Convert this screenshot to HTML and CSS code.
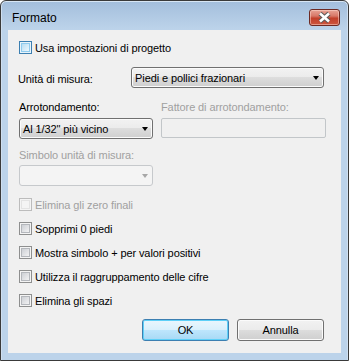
FILE: index.html
```html
<!DOCTYPE html>
<html lang="it">
<head>
<meta charset="utf-8">
<title>Formato</title>
<link rel="stylesheet" href="styles.css">
</head>
<body>
<div class="window">
  <div class="titlebar">
    <span class="title">Formato</span>
    <div class="close">
      <svg width="29" height="15" viewBox="0 0 29 15">
        <path d="M10 3.5 L19 11.5 M19 3.5 L10 11.5" stroke="#5a5a5a" stroke-width="4.6" fill="none"/>
        <path d="M10 3.5 L19 11.5 M19 3.5 L10 11.5" stroke="#ffffff" stroke-width="2.6" fill="none"/>
      </svg>
    </div>
  </div>
  <div class="client">
    <div class="check hot first">
      <span class="box"></span><span class="ctext">Usa impostazioni di progetto</span>
    </div>
    <div class="row-units">
      <span class="lbl units-lbl">Unità di misura:</span>
      <div class="combo units-combo"><span class="ctext-combo">Piedi e pollici frazionari</span><span class="arrow"></span></div>
    </div>
    <div class="pair labels">
      <span class="lbl">Arrotondamento:</span>
      <span class="lbl disabled">Fattore di arrotondamento:</span>
    </div>
    <div class="pair fields">
      <div class="combo"><span class="ctext-combo">Al 1/32" più vicino</span><span class="arrow"></span></div>
      <div class="edit disabled-edit"></div>
    </div>
    <div class="lbl disabled sym-lbl">Simbolo unità di misura:</div>
    <div class="combo combo-disabled sym-combo"><span class="ctext-combo"></span><span class="arrow"></span></div>
    <div class="check disabled-check mid">
      <span class="box"></span><span class="ctext">Elimina gli zero finali</span>
    </div>
    <div class="check">
      <span class="box"></span><span class="ctext">Sopprimi 0 piedi</span>
    </div>
    <div class="check">
      <span class="box"></span><span class="ctext">Mostra simbolo + per valori positivi</span>
    </div>
    <div class="check">
      <span class="box"></span><span class="ctext">Utilizza il raggruppamento delle cifre</span>
    </div>
    <div class="check">
      <span class="box"></span><span class="ctext">Elimina gli spazi</span>
    </div>
    <div class="buttons">
      <div class="btn default">OK</div>
      <div class="btn">Annulla</div>
    </div>
  </div>
</div>
</body>
</html>
```

FILE: styles.css
```css
html, body {
  margin: 0;
  padding: 0;
  background: #ffffff;
}
body {
  font-family: "Liberation Sans", Arial, sans-serif;
  font-size: 11px;
  letter-spacing: -0.1px;
  color: #000;
}
.window {
  width: 349px;
  height: 361px;
  box-sizing: border-box;
  border: 1px solid #3a3a3a;
  border-radius: 6px 6px 0 0;
  background: linear-gradient(to bottom, #a3bedc 0px, #bcd3ea 28px, #bcd3ea 100%);
  display: flex;
  flex-direction: column;
  box-shadow: inset 0 1px 0 #d8e6f4, inset 1px 0 0 #cfdff0, inset -1px 0 0 #cfdff0;
}
.titlebar {
  height: 29px;
  display: flex;
  justify-content: space-between;
  align-items: flex-start;
  padding: 0 8px 0 11px;
  flex: none;
}
.title {
  font-size: 12px;
  letter-spacing: 0;
  line-height: 15px;
  margin-top: 10px;
}
.close {
  margin-top: 8px;
  width: 31px;
  height: 17px;
  box-sizing: border-box;
  border: 1px solid #6d2a23;
  border-radius: 3px;
  background: linear-gradient(to bottom, #e8a496 0%, #d87868 40%, #c2402b 55%, #cd573f 100%);
  box-shadow: inset 0 0 0 1px rgba(255, 220, 210, 0.5);
  display: flex;
}
.client {
  flex: 1;
  margin: 0 7px 7px 7px;
  background: #f0f0f0;
  padding: 11px 17px 0 11px;
  display: flex;
  flex-direction: column;
}
.check {
  display: flex;
  align-items: flex-start;
  height: 13px;
  margin-top: 11px;
}
.check.first {
  margin-top: 0;
}
.check.mid {
  margin-top: 12px;
}
.box {
  width: 13px;
  height: 13px;
  box-sizing: border-box;
  border: 1px solid #8e8f8f;
  background: #f4f4f4;
  display: flex;
  align-items: center;
  justify-content: center;
  flex: none;
}
.box::before {
  content: "";
  width: 9px;
  height: 9px;
  box-sizing: border-box;
  border: 1px solid #b4b7bc;
  background: linear-gradient(135deg, #cdd0d5 0%, #f2f2f3 100%);
}
.hot .box {
  border-color: #3c7fb1;
  background: #e8f4fb;
}
.hot .box::before {
  border-color: #8fcbee;
  background: linear-gradient(135deg, #b9def3 0%, #edf7fd 100%);
}
.disabled-check .box {
  border-color: #bcbcbc;
  background: #f4f4f4;
}
.disabled-check .box::before {
  border-color: #e3e3e3;
  background: #f4f4f4;
}
.ctext {
  line-height: 15px;
  margin-top: 0px;
  margin-left: 3px;
  white-space: nowrap;
}
.disabled-check .ctext {
  color: #a0a0a0;
}
.lbl {
  line-height: 15px;
  white-space: nowrap;
}
.disabled {
  color: #a0a0a0;
}
.row-units {
  display: flex;
  align-items: center;
  margin-top: 13px;
  height: 21px;
}
.units-lbl {
  width: 115px;
  margin-left: -1px;
  padding-top: 3px;
}
.combo {
  height: 21px;
  box-sizing: border-box;
  border: 1px solid #707070;
  border-radius: 3px;
  background: linear-gradient(to bottom, #f2f2f2 0%, #ebebeb 50%, #dddddd 50%, #cfcfcf 100%);
  box-shadow: inset 0 0 0 1px #fbfbfb;
  display: flex;
  align-items: center;
  justify-content: space-between;
  padding: 0 4px 0 3px;
}
.units-combo {
  width: 196px;
}
.ctext-combo {
  line-height: 15px;
  padding-top: 2px;
  white-space: nowrap;
}
.arrow {
  width: 0;
  height: 0;
  border-left: 3.5px solid transparent;
  border-right: 3.5px solid transparent;
  border-top: 4px solid #000;
  margin-top: 1px;
}
.pair {
  display: grid;
  grid-template-columns: 134px 165px;
  column-gap: 8px;
}
.labels {
  margin-top: 12px;
}
.fields {
  margin-top: 3px;
}
.edit {
  height: 20px;
  box-sizing: border-box;
  margin-top: 0px;
}
.disabled-edit {
  border: 1px solid #c2c6c9;
  border-radius: 2px;
  background: #f0f0f0;
}
.sym-lbl {
  margin-top: 9px;
}
.sym-combo {
  margin-top: 2px;
  width: 134px;
}
.combo-disabled {
  border-color: #c6c9cc;
  background: #f4f4f4;
  box-shadow: none;
}
.combo-disabled .arrow {
  border-top-color: #a7a7a7;
}
.buttons {
  display: flex;
  justify-content: flex-end;
  gap: 8px;
  margin-top: 12px;
}
.btn {
  width: 87px;
  height: 22px;
  box-sizing: border-box;
  border: 1px solid #707070;
  border-radius: 3px;
  background: linear-gradient(to bottom, #f2f2f2 0%, #ebebeb 50%, #dddddd 50%, #cfcfcf 100%);
  box-shadow: inset 0 0 0 1px #fbfbfb;
  display: flex;
  align-items: center;
  justify-content: center;
  line-height: 15px;
}
.btn.default {
  border-color: #3c7fb1;
  background: linear-gradient(to bottom, #eaf6fd 0%, #d9f0fc 50%, #bee6fd 50%, #a7d9f5 100%);
  box-shadow: inset 0 0 0 1px #5ed0f8;
}
```
